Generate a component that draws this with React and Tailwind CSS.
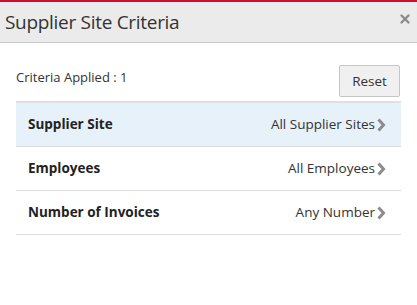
import { X } from "lucide-react";

const rows = [
  { label: "Supplier Site", value: "All Supplier Sites", active: true },
  { label: "Employees", value: "All Employees" },
  { label: "Number of Invoices", value: "Any Number" },
];

const Chevron = () => (
  <svg width="10" height="14" viewBox="0 0 10 14" className="ml-[1px] text-[#8c8c8c]">
    <path d="M2.5 1.5 L7.5 7 L2.5 12.5" fill="none" stroke="currentColor" strokeWidth="3" />
  </svg>
);

export default function App() {
  return (
    <div className="w-[417px] h-[305px] bg-white text-[#333] font-['Open_Sans',sans-serif] overflow-hidden">
      <div className="h-[2px] bg-[#c8102e]" />
      <div className="h-[41px] bg-[#ebebeb] border-b border-[#c8c8c8] flex items-center justify-between pl-[5px] pr-[5px]">
        <h1 className="text-[19px] text-[#333] tracking-[-0.3px] mt-[1px]">Supplier Site Criteria</h1>
        <X className="w-[14px] h-[14px] text-[#8a8a8a] -mt-[6px]" strokeWidth={4} />
      </div>
      <div className="px-4 pt-[22px]">
        <div className="flex justify-between items-start">
          <span className="text-[13px] mt-[3px] text-[#333]">Criteria Applied : 1</span>
          <button className="w-[61px] h-[32px] mr-[1px] text-[13.5px] bg-[#f0f0f0] border border-[#c6c6c6] rounded-[2px] text-[#333]">
            Reset
          </button>
        </div>
        <div className="mt-[4px] border-t-2 border-[#e0e0e0]">
          {rows.map((r) => (
            <div
              key={r.label}
              className={`h-[44px] flex items-center justify-between pl-3 pr-[15px] border-b border-[#dcdcdc] ${r.active ? "bg-[#e6f1f9]" : ""}`}
            >
              <span className="text-[13.5px] font-bold text-[#222]">{r.label}</span>
              <span className="flex items-center text-[13.5px] text-[#333]">
                {r.value}
                <Chevron />
              </span>
            </div>
          ))}
        </div>
      </div>
    </div>
  );
}
